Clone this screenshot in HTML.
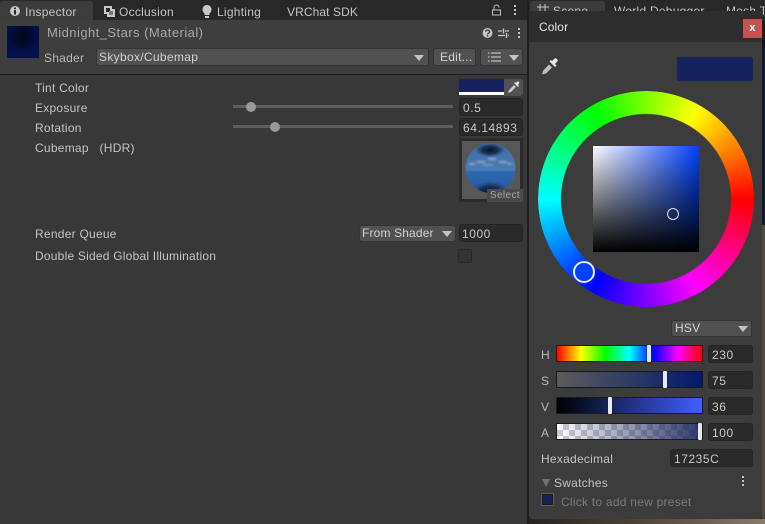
<!DOCTYPE html>
<html><head><meta charset="utf-8"><style>
html,body{margin:0;padding:0;background:#383838}
#r{position:relative;width:765px;height:524px;overflow:hidden;background:#383838;font:12px/14px "Liberation Sans",sans-serif;color:#c4c4c4;letter-spacing:.25px}
#r div,#r svg{position:absolute}
.t{white-space:nowrap}
.f{background:#2a2a2a;border:1px solid #242424;border-radius:3px;box-sizing:border-box;padding-left:3px;line-height:18px;color:#c8c8c8;white-space:nowrap;letter-spacing:.55px}
.b{background:#515151;border:1px solid #343434;border-radius:3px;box-sizing:border-box;padding-left:3px;line-height:16px;color:#d2d2d2;white-space:nowrap}
.tri{width:0;height:0;border-left:5px solid transparent;border-right:5px solid transparent;border-top:6px solid #c4c4c4}
.sl{box-sizing:border-box;border:1px solid #1a1a1a;height:17px;left:556px;width:147px}
.h{width:4px;height:17px;background:#e8e8f0;border-radius:1px;box-shadow:0 0 1px #0008}
</style></head><body><div id="r">
<!-- tab bar -->
<div style="left:0;top:0;width:527px;height:20px;background:#282828"></div>
<div style="left:0;top:1px;width:93px;height:19px;background:#3c3c3c;border-radius:3px 3px 0 0"></div>
<svg style="left:9px;top:5px" width="14" height="14" viewBox="0 0 14 14"><circle cx="6" cy="6" r="5" fill="#c8c8c8"/><rect x="5" y="5" width="2" height="4.500" fill="#282828"/><rect x="5" y="2.500" width="2" height="1.600" fill="#282828"/></svg>
<div class="t" style="left:25px;top:5px">Inspector</div>
<svg style="left:104px;top:6px" width="12" height="12" viewBox="0 0 12 12"><path d="M0 0h8v3h3v8H3V8H0z" fill="#c8c8c8"/><rect x="2" y="2" width="4" height="4" fill="#282828"/><rect x="5" y="5" width="4" height="4" fill="#777"/></svg>
<div class="t" style="left:119px;top:5px">Occlusion</div>
<svg style="left:202px;top:5px" width="10" height="14" viewBox="0 0 10 14"><path d="M5 0a4.500 4.500 0 0 1 2.500 8.200V10h-5V8.200A4.500 4.500 0 0 1 5 0z" fill="#c8c8c8"/><rect x="3" y="11" width="4" height="2" fill="#c8c8c8"/></svg>
<div class="t" style="left:217px;top:5px">Lighting</div>
<div class="t" style="left:287px;top:5px;letter-spacing:.1px">VRChat SDK</div>
<svg style="left:491px;top:4px" width="12" height="12" viewBox="0 0 12 12"><rect x="1.500" y="6" width="8" height="5" fill="none" stroke="#c4c4c4"/><path d="M3 6V3.500a2.500 2.500 0 0 1 5 0" fill="none" stroke="#c4c4c4"/></svg>
<svg style="left:512px;top:4px" width="6" height="12" viewBox="0 0 6 12"><rect x="2" y="1" width="2" height="2" fill="#c4c4c4"/><rect x="2" y="5" width="2" height="2" fill="#c4c4c4"/><rect x="2" y="9" width="2" height="2" fill="#c4c4c4"/></svg>
<!-- header -->
<div style="left:0;top:20px;width:527px;height:54px;background:#3e3e3e"></div>
<div style="left:0;top:74px;width:527px;height:1px;background:#1c1c1c"></div>
<div style="left:7px;top:26px;width:32px;height:32px;background:radial-gradient(circle at 50% 30%,#020518 0,#041048 60%,#03124f 100%)"></div>
<div class="t" style="left:47px;top:26px;font-size:13px;color:#a8a8a8;letter-spacing:.45px">Midnight_Stars (Material)</div>
<div class="t" style="left:44px;top:51px;color:#b8b8b8">Shader</div>
<div class="b" style="left:96px;top:48px;width:333px;height:18px;padding-left:2px;letter-spacing:.32px">Skybox/Cubemap</div>
<div class="tri" style="left:414px;top:55px"></div>
<div class="b" style="left:433px;top:48px;width:43px;height:18px;padding-left:6px">Edit...</div>
<div class="b" style="left:480px;top:48px;width:43px;height:18px"></div>
<svg style="left:488px;top:51px" width="14" height="12" viewBox="0 0 14 12"><path d="M3 2h10M3 6h10M3 10h10" stroke="#d8d8d8" stroke-width="1"/><path d="M0 2h1.500M0 6h1.500M0 10h1.500" stroke="#d8d8d8"/></svg>
<div class="tri" style="left:509px;top:55px"></div>
<svg style="left:482px;top:27px" width="12" height="12" viewBox="0 0 12 12"><circle cx="5.500" cy="6" r="5" fill="#c4c4c4"/><path d="M3.700 4.800a1.900 1.700 0 1 1 2.800 1.400c-.7.400-1 .7-1 1.300" fill="none" stroke="#3e3e3e" stroke-width="1.300"/><rect x="4.800" y="8.200" width="1.400" height="1.400" fill="#3e3e3e"/></svg>
<svg style="left:497px;top:27px" width="13" height="12" viewBox="0 0 13 12"><path d="M1 4h4M8 4h4M1 8.500h7M11 8.500h1" stroke="#c4c4c4" stroke-width="1.200"/><path d="M6.500 1.500v5M9.500 6v5" stroke="#c4c4c4" stroke-width="1.400"/></svg>
<svg style="left:516px;top:27px" width="6" height="12" viewBox="0 0 6 12"><rect x="2" y="1" width="2" height="2" fill="#c4c4c4"/><rect x="2" y="5" width="2" height="2" fill="#c4c4c4"/><rect x="2" y="9" width="2" height="2" fill="#c4c4c4"/></svg>
<!-- properties -->
<div class="t" style="left:35px;top:81px">Tint Color</div>
<div style="left:459px;top:79px;width:46px;height:13px;background:#17235c"></div>
<div style="left:459px;top:92px;width:45px;height:3px;background:#fff"></div>
<div style="left:504px;top:79px;width:19px;height:17px;background:#515151;border-radius:0 3px 3px 0"></div>
<svg style="left:507px;top:81px" width="13" height="13" viewBox="0 0 13 13"><path d="M1 12l1-3 5-5 2 2-5 5z" fill="#c8c8c8"/><path d="M7 2l4 4 1-1-1-1 1-1.500a1 1 0 0 0-2-1.500L9 2 8 1z" fill="#e4e4e4"/></svg>
<div class="t" style="left:35px;top:101px">Exposure</div>
<div style="left:233px;top:105px;width:220px;height:3px;background:#5e5e5e"></div>
<div style="left:246px;top:102px;width:10px;height:10px;border-radius:50%;background:#999"></div>
<div class="f" style="left:459px;top:98px;width:64px;height:18px">0.5</div>
<div class="t" style="left:35px;top:121px">Rotation</div>
<div style="left:233px;top:125px;width:220px;height:3px;background:#5e5e5e"></div>
<div style="left:270px;top:122px;width:10px;height:10px;border-radius:50%;background:#999"></div>
<div class="f" style="left:459px;top:118px;width:64px;height:18px">64.14893</div>
<div class="t" style="left:35px;top:141px">Cubemap&nbsp;&nbsp; (HDR)</div>
<div style="left:459px;top:138px;width:64px;height:64px;box-sizing:border-box;border:3px solid #2a2a2a;background:#575757"></div>
<svg style="left:462px;top:141px" width="58" height="58" viewBox="0 0 58 58"><defs>
<linearGradient id="sp" x1="0" y1="0" x2="0" y2="1"><stop offset="0" stop-color="#3d6a9e"/><stop offset=".5" stop-color="#4a7bb4"/><stop offset=".53" stop-color="#2c68b4"/><stop offset=".75" stop-color="#2a5ea4"/><stop offset="1" stop-color="#2a5590"/></linearGradient>
<radialGradient id="dk"><stop offset="0" stop-color="#081426"/><stop offset=".55" stop-color="#0e2340" stop-opacity=".8"/><stop offset="1" stop-color="#1a3a66" stop-opacity="0"/></radialGradient>
<clipPath id="cp"><circle cx="28.500" cy="27" r="25"/></clipPath>
<filter id="bl"><feGaussianBlur stdDeviation="1"/></filter></defs>
<g clip-path="url(#cp)"><rect width="58" height="58" fill="url(#sp)"/>
<ellipse cx="28" cy="9" rx="15" ry="7" fill="url(#dk)"/>
<ellipse cx="28" cy="52" rx="20" ry="12" fill="url(#dk)"/>
<g fill="#a6bfd8" filter="url(#bl)" opacity=".7"><ellipse cx="19" cy="21" rx="5" ry="1.200"/><ellipse cx="30" cy="18" rx="5" ry="1.400"/><ellipse cx="41" cy="21" rx="5" ry="1.300"/><ellipse cx="10" cy="23" rx="4" ry="1.100"/><ellipse cx="48" cy="23" rx="3" ry="1.100"/><ellipse cx="26" cy="24" rx="6" ry=".8"/></g></g></svg>
<div class="t" style="left:487px;top:189px;width:36px;height:13px;background:#4a4a4a;font-size:10px;line-height:13px;text-align:center;color:#a8a8a8;letter-spacing:.4px">Select</div>
<div class="t" style="left:35px;top:227px">Render Queue</div>
<div class="b" style="left:359px;top:225px;width:97px;height:17px;line-height:15px;padding-left:2px;letter-spacing:.15px">From Shader</div>
<div class="tri" style="left:442px;top:231px"></div>
<div class="f" style="left:459px;top:224px;width:64px;height:18px;line-height:18px;padding-left:2px">1000</div>
<div class="t" style="left:35px;top:249px;letter-spacing:.22px">Double Sided Global Illumination</div>
<div style="left:458px;top:249px;width:14px;height:14px;box-sizing:border-box;background:#333;border:1px solid #282828;border-radius:2px"></div>
<!-- behind -->
<div style="left:527px;top:0;width:238px;height:524px;background:#1f1f1f"></div>
<div style="left:529px;top:0;width:236px;height:20px;background:#282828"></div>
<div style="left:530px;top:1px;width:75px;height:19px;background:#3c3c3c;border-radius:3px 3px 0 0"></div>
<div class="t" style="left:553px;top:4px">Scene</div>
<svg style="left:537px;top:4px" width="12" height="12" viewBox="0 0 12 12"><path d="M3 0v12M8 0v12M0 3h12M0 8h12" stroke="#c4c4c4" fill="none"/></svg>
<div class="t" style="left:614px;top:4px">World Debugger</div>
<div class="t" style="left:726px;top:4px">Mesh T</div>
<div style="left:529px;top:519px;width:236px;height:5px;background:linear-gradient(90deg,#2a2420,#4a3d30 40%,#6a5a48 70%,#8a7a66)"></div>
<div style="left:762px;top:40px;width:3px;height:185px;background:#0e1530"></div>
<div style="left:762px;top:225px;width:3px;height:294px;background:#4e4a44"></div>
<!-- color window -->
<div style="left:529px;top:11px;width:233px;height:508px;background:#3c3c3c;border-radius:0 0 3px 3px"></div>
<div style="left:529px;top:11px;width:233px;height:31px;background:#2d2d2d"></div>
<div class="t" style="left:539px;top:20px;color:#e2e2e2;letter-spacing:.1px">Color</div>
<div class="t" style="left:743px;top:19px;width:19px;height:19px;background:#c85252;color:#fff;font-weight:bold;font-size:11px;line-height:18px;text-align:center">x</div>
<svg style="left:541px;top:57px" width="18" height="19" viewBox="0 0 18 19"><path d="M1 17.500l1.200-4L8 7.500l3 3-6 6z" fill="#bdbdbd"/><path d="M8.500 4.500l5.500 5.500 1.500-1.500-1.500-1.500 2-2.200a1.800 1.800 0 0 0-3-2.800L11 4 10 3z" fill="#e6e6e6"/></svg>
<div style="left:677px;top:57px;width:76px;height:24px;background:#17235c;border-radius:2px"></div>
<div style="left:538px;top:91px;width:216px;height:216px;border-radius:50%;background:conic-gradient(from 90deg,#f00,#f0f,#00f,#0ff,#0f0,#ff0,#f00);-webkit-mask:radial-gradient(circle,transparent 84.500px,#000 85.500px);mask:radial-gradient(circle,transparent 84.500px,#000 85.500px)"></div>
<div style="left:593px;top:146px;width:106px;height:106px;background:linear-gradient(to top,#000,transparent),linear-gradient(to right,#fff,#0040ff)"></div>
<div style="left:667px;top:208px;width:12px;height:12px;box-sizing:border-box;border:1px solid #d8dcec;border-radius:50%"></div>
<div style="left:573px;top:261px;width:22px;height:22px;box-sizing:border-box;border:2px solid #eef;border-radius:50%;background:#0040ff"></div>
<div class="b" style="left:671px;top:320px;width:81px;height:17px;line-height:15px">HSV</div>
<div class="tri" style="left:738px;top:326px"></div>
<div class="t" style="left:541px;top:348px;color:#b8b8b8">H</div>
<div class="sl" style="top:345px;background:linear-gradient(90deg,#f00,#ff0,#0f0,#0ff,#00f,#f0f,#f00)"></div>
<div class="h" style="left:647px;top:345px"></div>
<div class="f" style="left:708px;top:345px;width:45px;height:18px">230</div>
<div class="t" style="left:541px;top:374px;color:#b8b8b8">S</div>
<div class="sl" style="top:371px;background:linear-gradient(90deg,#5c5c5c,#001a6c)"></div>
<div class="h" style="left:663px;top:371px"></div>
<div class="f" style="left:708px;top:371px;width:45px;height:18px">75</div>
<div class="t" style="left:541px;top:400px;color:#b8b8b8">V</div>
<div class="sl" style="top:397px;background:linear-gradient(90deg,#000,#4060ff)"></div>
<div class="h" style="left:608px;top:397px"></div>
<div class="f" style="left:708px;top:397px;width:45px;height:18px">36</div>
<div class="t" style="left:541px;top:426px;color:#b8b8b8">A</div>
<div class="sl" style="top:423px;background:linear-gradient(90deg,#17235c00,#17235ce6),repeating-conic-gradient(#ccc 0 25%,#fff 0 50%) 0 0/12px 12px"></div>
<div class="h" style="left:698px;top:423px"></div>
<div class="f" style="left:708px;top:423px;width:45px;height:18px">100</div>
<div class="t" style="left:541px;top:452px">Hexadecimal</div>
<div class="f" style="left:670px;top:449px;width:83px;height:18px">17235C</div>
<div style="left:542px;top:479px;width:0;height:0;border-left:4.500px solid transparent;border-right:4.500px solid transparent;border-top:8px solid #707070"></div>
<div class="t" style="left:554px;top:476px">Swatches</div>
<svg style="left:740px;top:475px" width="6" height="12" viewBox="0 0 6 12"><rect x="2" y="1" width="2" height="2" fill="#c4c4c4"/><rect x="2" y="5" width="2" height="2" fill="#c4c4c4"/><rect x="2" y="9" width="2" height="2" fill="#c4c4c4"/></svg>
<div style="left:541px;top:493px;width:13px;height:13px;background:#606060;border-radius:2px"></div>
<div style="left:542px;top:494px;width:11px;height:11px;background:#1a1a1a"></div>
<div style="left:543px;top:495px;width:9px;height:9px;background:#17235c"></div>
<div class="t" style="left:561px;top:495px;color:#7c7c7c">Click to add new preset</div>
</div></body></html>
